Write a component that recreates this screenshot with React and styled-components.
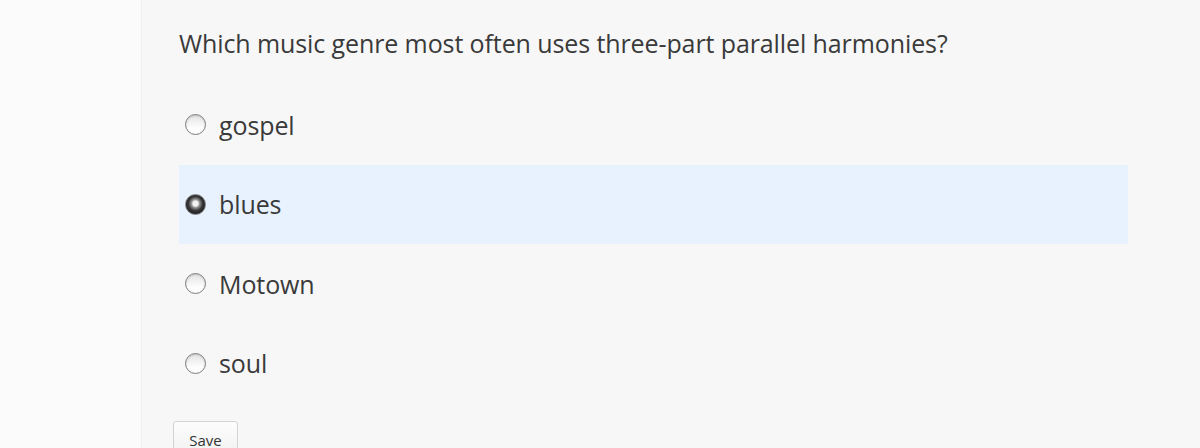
import React, { useState } from "react";
import styled, { createGlobalStyle } from "styled-components";

const GlobalStyle = createGlobalStyle`
  html, body {
    margin: 0;
    padding: 0;
    background: #fafafa;
    font-family: "Open Sans", Lato, sans-serif;
  }
`;

const Page = styled.div`
  display: flex;
  height: 448px;
  overflow: hidden;
`;

const Gutter = styled.div`
  width: 141px;
  flex-shrink: 0;
  background: #fbfbfb;
  border-right: 1px solid #f0f0f0;
`;

const Panel = styled.div`
  flex: 1;
  background: #f7f7f7;
  padding: 26px 72px 0 37px;
`;

const Question = styled.h2`
  margin: 0 0 25px;
  font-size: 25px;
  font-weight: 400;
  color: #3a3a3a;
  line-height: 34px;
  letter-spacing: -0.1px;
`;

const Options = styled.div`
  display: flex;
  flex-direction: column;
`;

const Option = styled.label`
  display: flex;
  align-items: center;
  height: 79.5px;
  padding-left: 6px;
  background: ${(p) => (p.$selected ? "#e8f2fe" : "transparent")};
  cursor: pointer;
`;

const Radio = styled.span`
  width: 21px;
  height: 21px;
  border-radius: 50%;
  box-sizing: border-box;
  border: 1px solid #7d7d7d;
  background: ${(p) =>
    p.$checked
      ? "radial-gradient(circle at 50% 45%, #f4f4f4 0 2.5px, #9a9a9a 4px, #3a3a3a 7px, #222 10px)"
      : "linear-gradient(#e4e4e4, #fdfdfd 70%)"};
  box-shadow: inset 0 1px 2px rgba(0, 0, 0, 0.15);
  margin-right: 13px;
`;

const OptionText = styled.span`
  font-size: 25px;
  color: #3a3a3a;
  letter-spacing: -0.1px;
`;

const SaveButton = styled.button`
  margin: 18px 0 0 -6px;
  padding: 8px 0 8px;
  font-family: "Open Sans", Lato, sans-serif;
  font-size: 15px;
  color: #333;
  background: linear-gradient(#fdfdfd, #f0f0f0);
  border: 1px solid #d3d3d3;
  border-radius: 3px;
  width: 65px;
`;

const choices = ["gospel", "blues", "Motown", "soul"];

export default function App() {
  const [picked, setPicked] = useState("blues");
  return (
    <>
      <GlobalStyle />
      <Page>
        <Gutter />
        <Panel>
          <Question>Which music genre most often uses three-part parallel harmonies?</Question>
          <Options>
            {choices.map((c) => (
              <Option key={c} $selected={picked === c} onClick={() => setPicked(c)}>
                <Radio $checked={picked === c} />
                <OptionText>{c}</OptionText>
              </Option>
            ))}
          </Options>
          <SaveButton>Save</SaveButton>
        </Panel>
      </Page>
    </>
  );
}
